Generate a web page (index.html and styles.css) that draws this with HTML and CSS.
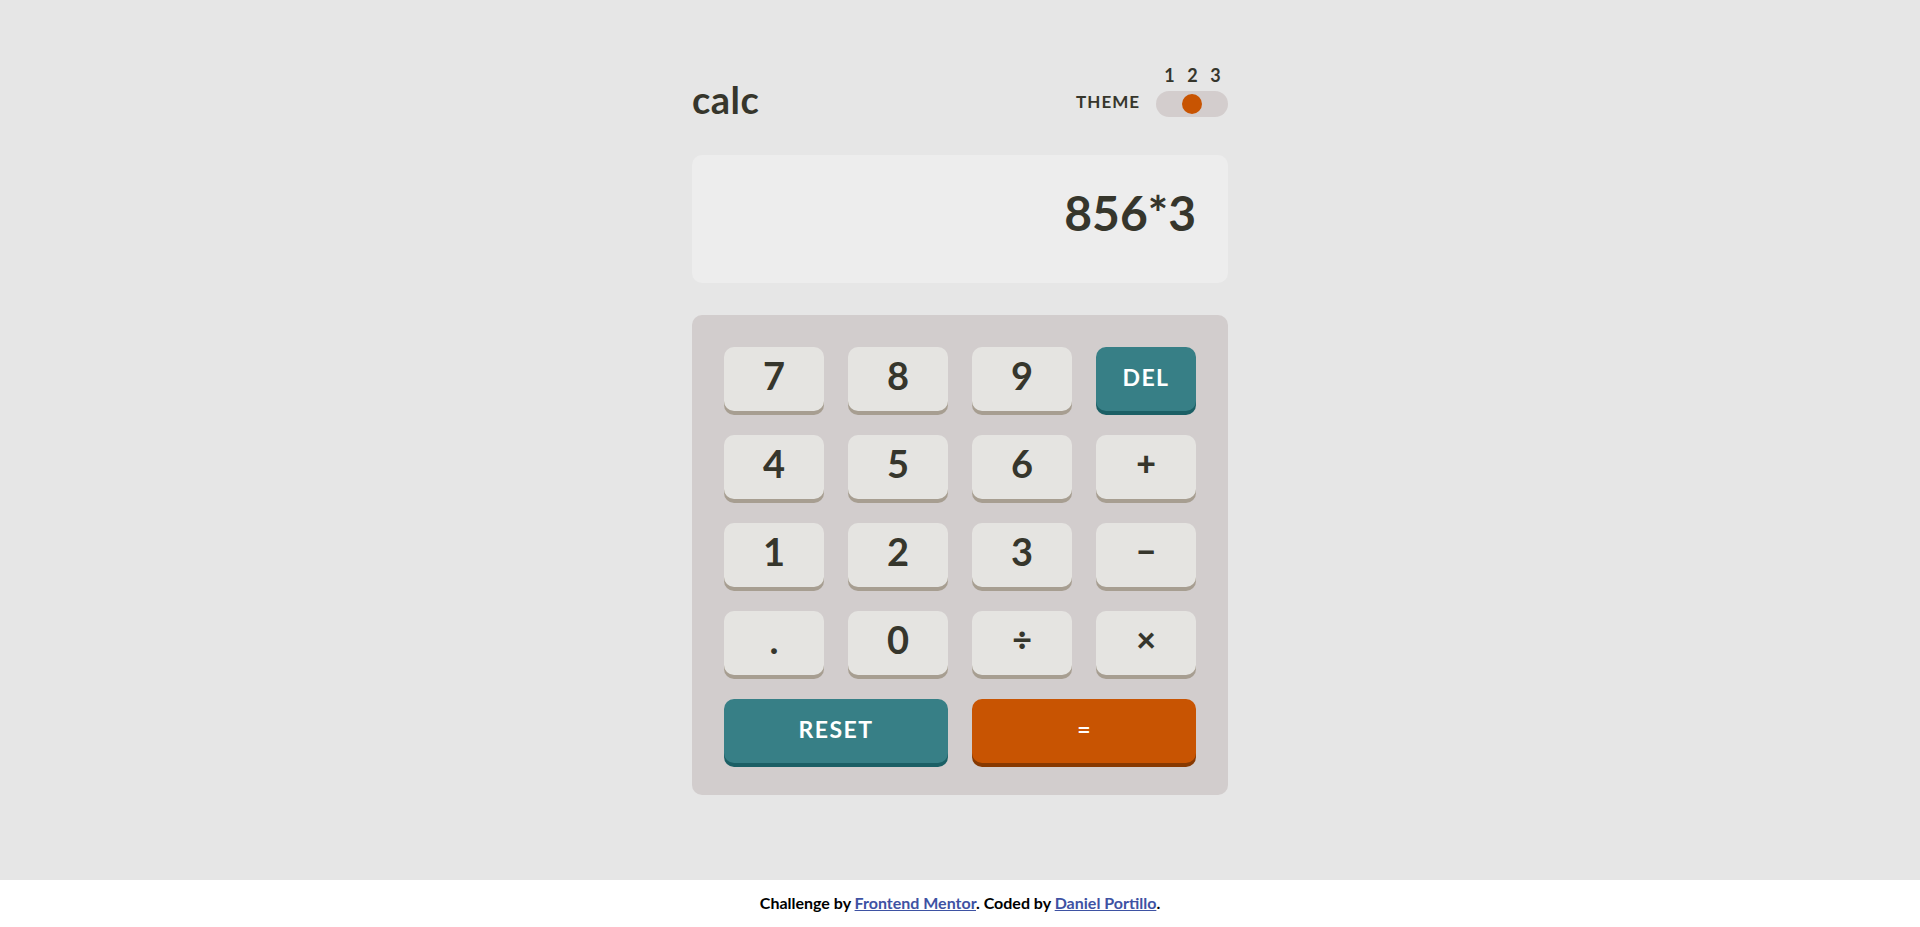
FILE: index.html
```html
<!DOCTYPE html>
<html lang="en">
<head>
<meta charset="utf-8">
<title>Calculator app</title>
<link rel="stylesheet" href="styles.css">
</head>
<body>
<main class="main">
  <div class="calc">
    <header class="header">
      <h1 class="logo">calc</h1>
      <div class="theme">
        <span class="theme-label">THEME</span>
        <div class="switch">
          <div class="switch-nums"><span>1</span><span>2</span><span>3</span></div>
          <div class="switch-track"><span class="switch-knob"></span></div>
        </div>
      </div>
    </header>
    <div class="screen"><span class="screen-value">856*3</span></div>
    <div class="keypad">
      <button class="key">7</button>
      <button class="key">8</button>
      <button class="key">9</button>
      <button class="key key-del">DEL</button>
      <button class="key">4</button>
      <button class="key">5</button>
      <button class="key">6</button>
      <button class="key key-op">+</button>
      <button class="key">1</button>
      <button class="key">2</button>
      <button class="key">3</button>
      <button class="key key-op">&minus;</button>
      <button class="key">.</button>
      <button class="key">0</button>
      <button class="key key-op">&divide;</button>
      <button class="key key-op">&times;</button>
      <button class="key key-del key-wide">RESET</button>
      <button class="key key-eq key-wide">=</button>
    </div>
  </div>
</main>
<footer class="footer">
  <p class="attribution">Challenge by <a href="#">Frontend Mentor</a>. Coded by <a href="#">Daniel Portillo</a>.</p>
</footer>
</body>
</html>
```
FILE: styles.css
```css
* { box-sizing: border-box; }

html, body { height: 100%; }

body {
  margin: 0;
  min-height: 100vh;
  display: flex;
  flex-direction: column;
  background: #e6e6e6;
  color: #36362c;
  font-family: "Lato", "Open Sans", sans-serif;
  font-weight: 700;
}

.main {
  flex: 1;
  display: flex;
  justify-content: center;
  align-items: flex-start;
  padding-top: 67px;
}

.calc {
  width: 536px;
}

.header {
  display: flex;
  justify-content: space-between;
  align-items: flex-end;
  margin-bottom: 38px;
}

.logo {
  margin: 0;
  font-size: 38px;
  line-height: 36px;
  font-weight: 700;
  letter-spacing: 0.5px;
  color: #36362c;
}

.theme {
  display: flex;
  align-items: flex-end;
  gap: 16px;
}

.theme-label {
  font-size: 17px;
  line-height: 17px;
  letter-spacing: 1px;
  margin-bottom: 7px;
}

.switch {
  display: flex;
  flex-direction: column;
  gap: 7px;
}

.switch-nums {
  display: grid;
  grid-template-columns: repeat(3, 1fr);
  padding: 0 1px 0 2px;
  font-size: 18px;
  line-height: 17px;
  text-align: center;
}

.switch-track {
  width: 72px;
  height: 26px;
  border-radius: 13px;
  background: #d3cdcd;
  padding: 3px;
  display: flex;
  justify-content: center;
}

.switch-knob {
  width: 20px;
  height: 20px;
  border-radius: 50%;
  background: #c85402;
}

.screen {
  height: 128px;
  border-radius: 10px;
  background: #ededed;
  display: flex;
  align-items: center;
  justify-content: flex-end;
  padding: 0 32px 12px;
  margin-bottom: 32px;
}

.screen-value {
  font-size: 48px;
  line-height: 48px;
}

.keypad {
  background: #d2cdcd;
  border-radius: 10px;
  padding: 32px;
  display: grid;
  grid-template-columns: repeat(4, 1fr);
  grid-auto-rows: 64px;
  gap: 24px;
}

.key {
  border: 0;
  border-radius: 10px;
  background: #e5e4e1;
  box-shadow: 0 4px 0 #a79e91;
  color: #36362c;
  font-family: inherit;
  font-weight: 700;
  font-size: 38px;
  line-height: 38px;
  padding: 0 0 8px;
  display: flex;
  align-items: center;
  justify-content: center;
  cursor: pointer;
}

.key-op {
  font-size: 34px;
  font-weight: 900;
}

.key-del {
  background: #377f86;
  box-shadow: 0 4px 0 #1b5f65;
  color: #ffffff;
  font-size: 23px;
  line-height: 23px;
  letter-spacing: 1.5px;
  padding-bottom: 4px;
}

.key-eq {
  background: #c85402;
  box-shadow: 0 4px 0 #873901;
  color: #ffffff;
  font-size: 23px;
  line-height: 23px;
  padding-bottom: 4px;
}

.key-wide {
  grid-column: span 2;
}

.footer {
  height: 47px;
  background: #ffffff;
  display: flex;
  align-items: center;
  justify-content: center;
  padding-bottom: 3px;
}

.attribution {
  margin: 0;
  font-size: 16px;
  color: #000000;
}

.attribution a {
  color: #3e52a3;
}
```
